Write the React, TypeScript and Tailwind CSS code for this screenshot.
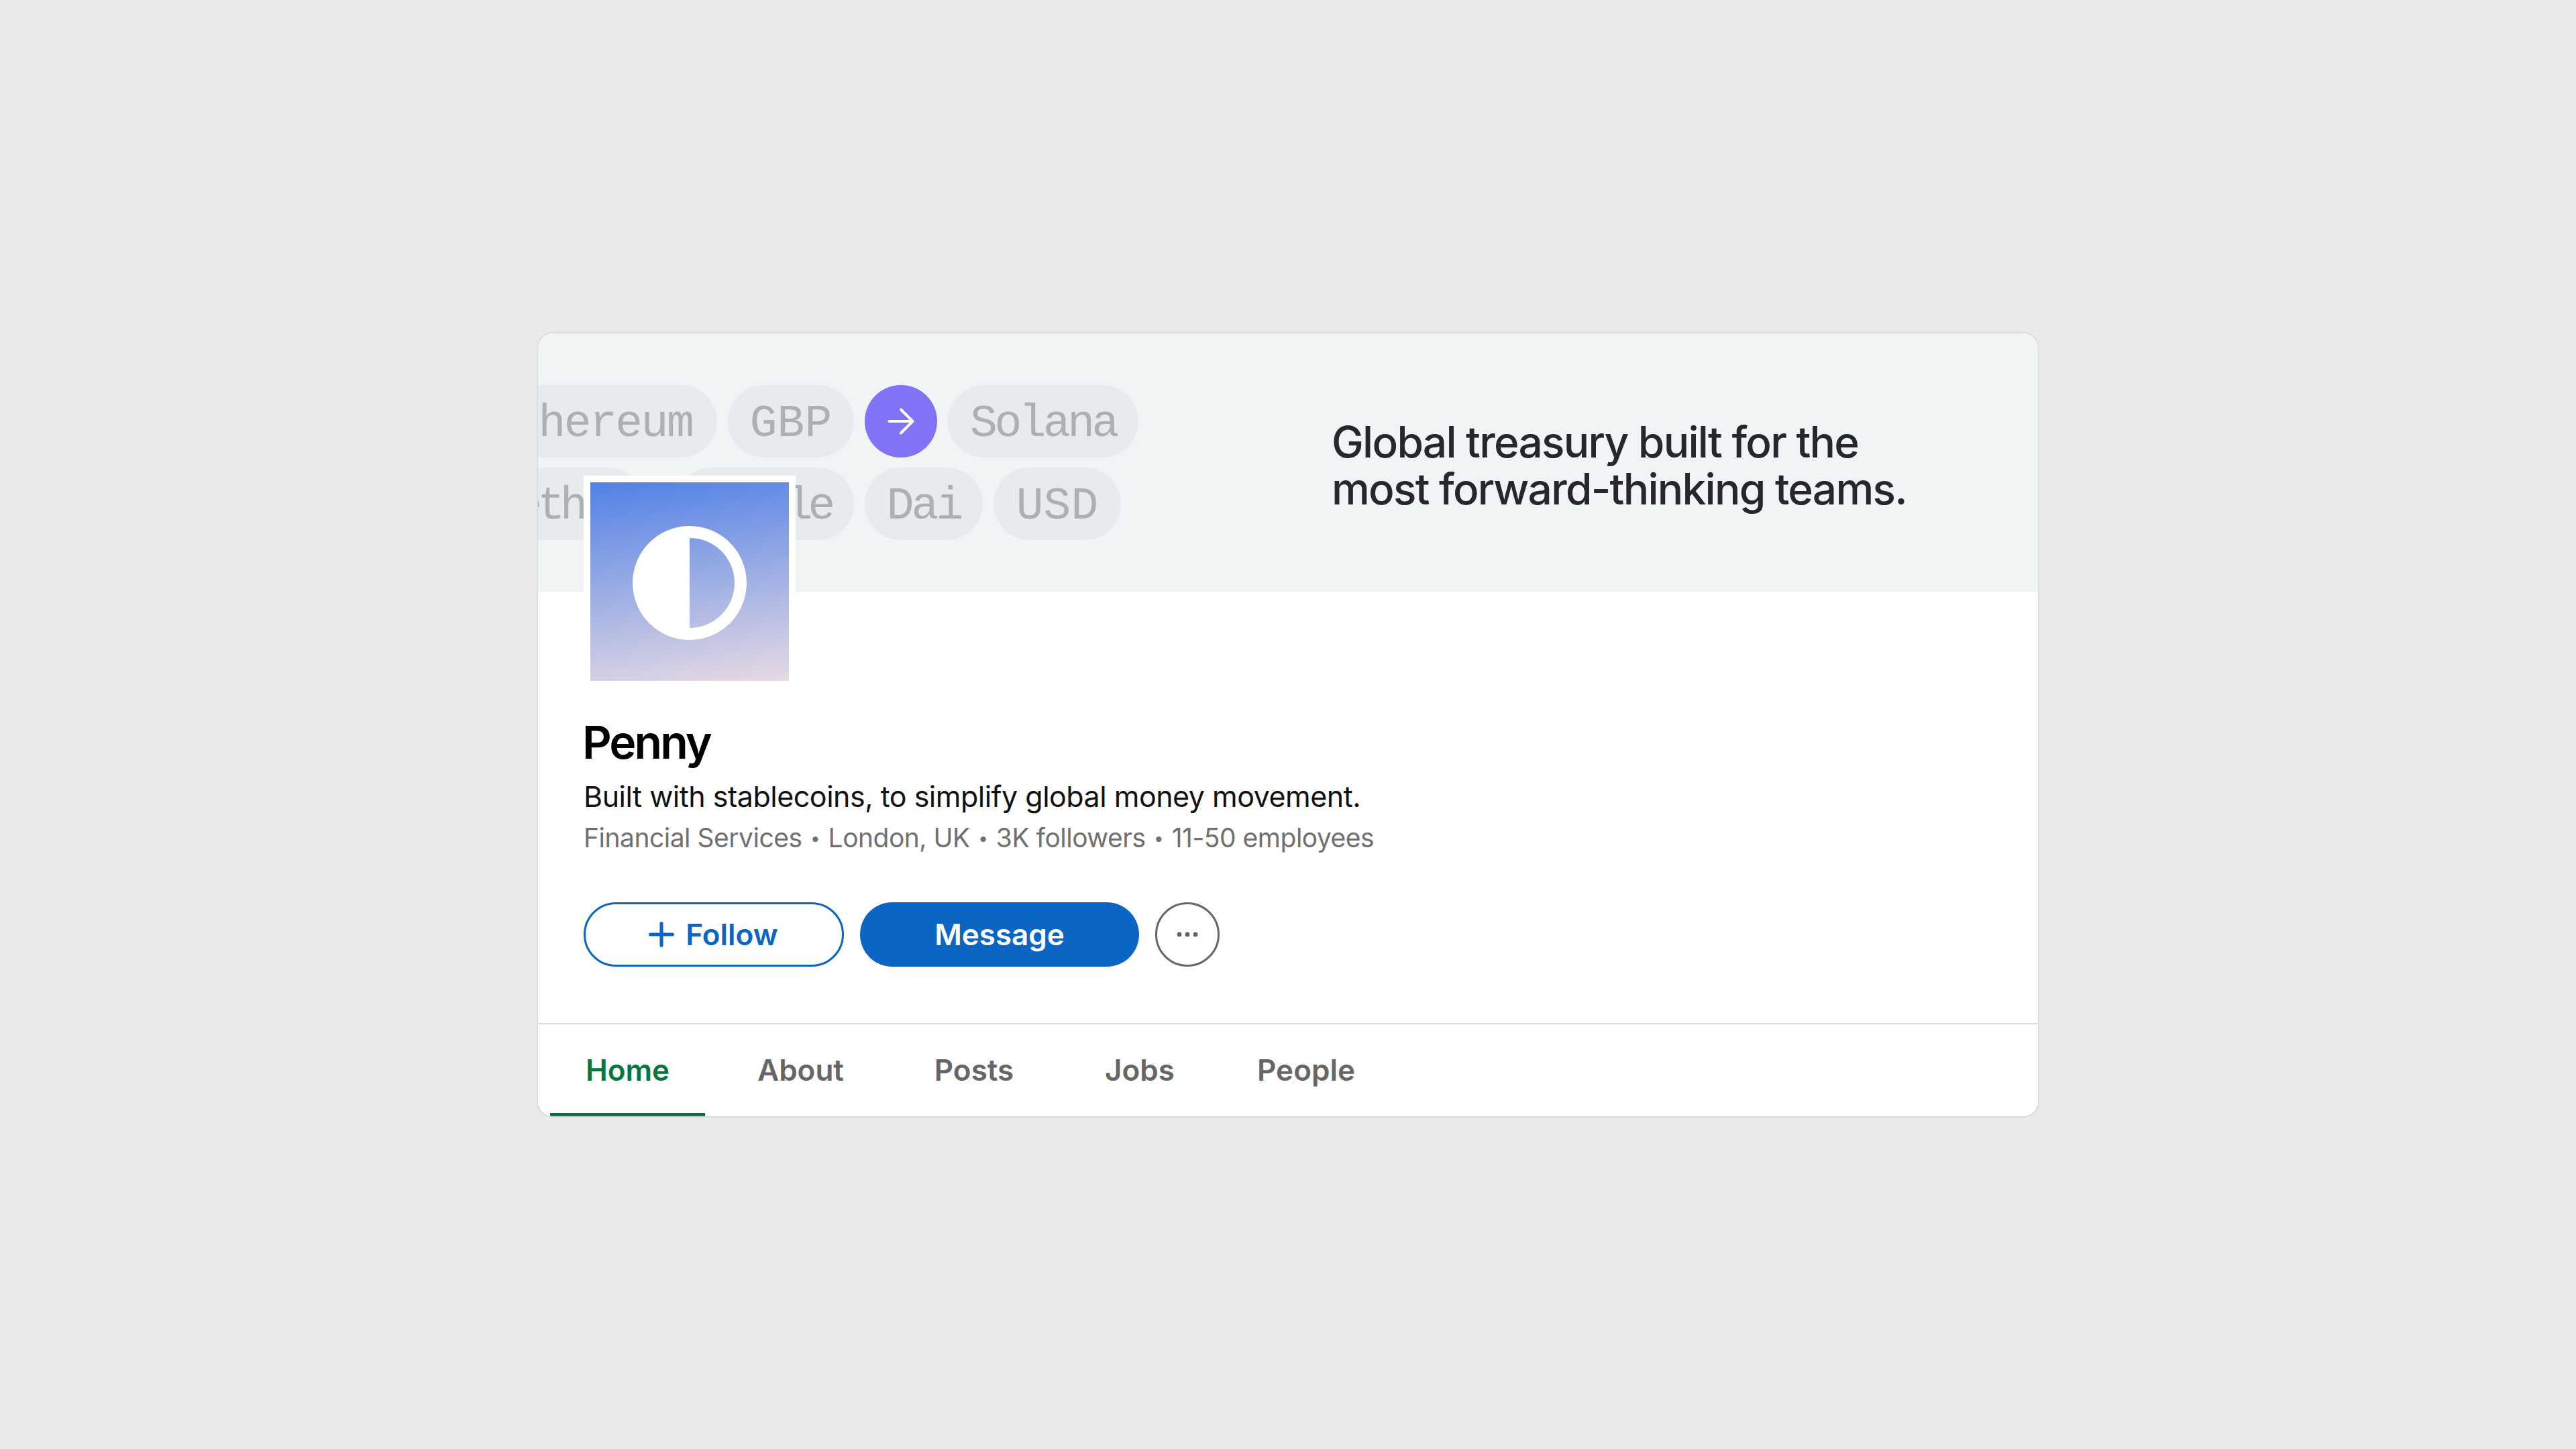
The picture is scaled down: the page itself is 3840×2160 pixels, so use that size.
import { ArrowRight, Plus } from 'lucide-react'

const sans = "font-['Inter',sans-serif]"
const mono = "font-['Liberation_Mono',monospace]"

function Pill({ label, className }: { label: string; className: string }) {
  return (
    <div
      className={`flex h-[108px] shrink-0 items-center justify-center rounded-full bg-[#e7ebed] pt-[8px] text-[68px] text-[#abb0b3] ${mono} ${className}`}
    >
      {label}
    </div>
  )
}

function Dot() {
  return <span className="mx-[2px] align-[4px] text-[26px]">•</span>
}

const tabs = [
  { label: 'Home', width: 'w-[231px]', active: true },
  { label: 'About', width: 'w-[285px]', active: false },
  { label: 'Posts', width: 'w-[232px]', active: false },
  { label: 'Jobs', width: 'w-[262px]', active: false },
  { label: 'People', width: 'w-[234px]', active: false },
]

export default function App() {
  return (
    <div className={`flex h-[2160px] w-[3840px] items-start justify-center bg-[#eaeaea] pt-[495px] ${sans}`}>
      <div className="relative h-[1171px] w-[2240px] overflow-hidden rounded-[24px] border-2 border-[#dcdcdc] bg-white">
        {/* Banner */}
        <div className="flex h-[385px] bg-[#f0f4f5]">
          <div className="flex w-[1185px] shrink-0 flex-col gap-[15px] pt-[77px]">
            <div className="ml-[-97px] flex gap-[16px]">
              <Pill label="Ethereum" className="w-[364px] pr-[16px] tracking-[-2.5px]" />
              <Pill label="GBP" className="w-[188px]" />
              <div className="flex size-[108px] shrink-0 items-center justify-center rounded-full bg-[#7f73f6]">
                <ArrowRight size={60} strokeWidth={1.6} className="text-white" />
              </div>
              <Pill label="Solana" className="w-[284px] tracking-[-4.5px]" />
            </div>
            <div className="ml-[-102px] flex gap-[16px]">
              <Pill label="Tether" className="w-[260px] pl-[10px] tracking-[-7px]" />
              <Pill label="Circle" className="ml-[31px] w-[266px] pr-[6px] tracking-[-7px]" />
              <Pill label="Dai" className="w-[176px] tracking-[-4px]" />
              <Pill label="USD" className="w-[190px]" />
            </div>
          </div>
          <div className="ml-[-2px] whitespace-nowrap pt-[127px] text-[64px] font-medium leading-[70px] tracking-[-1.75px] text-[#26262b]">
            <div>Global treasury built for the</div>
            <div>most forward-thinking teams.</div>
          </div>
        </div>

        {/* Logo */}
        <div className="relative mb-[41px] ml-[68px] mt-[-173px] size-[316px] border-[10px] border-white bg-[linear-gradient(172deg,#5181e6_0%,#e6dae3_100%)]">
          <div className="flex size-full items-center justify-center pt-[3px]">
            <svg width="170" height="170" viewBox="0 0 170 170">
              <path
                fill="#ffffff"
                fillRule="evenodd"
                d="M85 0a85 85 0 1 0 0 170A85 85 0 0 0 85 0ZM85 18a67 67 0 0 1 0 134Z"
              />
            </svg>
          </div>
        </div>

        {/* Company info */}
        <div className="pl-[68px]">
          <h1 className="ml-[-2px] text-[68px] font-semibold leading-[80px] tracking-[-3px] text-black">Penny</h1>
          <p className="mt-[13px] text-[43px] leading-[56px] tracking-[-0.5px] text-[#111111]">
            Built with stablecoins, to simplify global money movement.
          </p>
          <p className="mt-[8px] text-[39px] leading-[52px] tracking-[-0.5px] text-[#707070]">
            Financial Services <Dot /> London, UK <Dot /> 3K followers <Dot /> 11-50 employees
          </p>

          <div className="mt-[69px] flex gap-[24px]">
            <button className="flex h-[96px] w-[388px] items-center justify-center gap-[8px] rounded-full border-[3px] border-[#0a66c2] pr-[10px] text-[44px] font-semibold text-[#0a66c2]">
              <Plus size={56} strokeWidth={2.2} />
              Follow
            </button>
            <button className="flex h-[96px] w-[416px] items-center justify-center rounded-full bg-[#0a66c2] text-[44px] font-semibold text-white">
              Message
            </button>
            <button className="flex size-[96px] items-center justify-center rounded-full border-[3px] border-[#666666]">
              <svg width="32" height="8" viewBox="0 0 32 8" fill="#666666">
                <circle cx="4" cy="4" r="3.4" />
                <circle cx="16" cy="4" r="3.4" />
                <circle cx="28" cy="4" r="3.4" />
              </svg>
            </button>
          </div>
        </div>

        {/* Tabs */}
        <div className="mt-[84px] flex h-[140px] border-t-2 border-[#dcdcdc] pl-[18px]">
          {tabs.map((tab) => (
            <div
              key={tab.label}
              className={`flex h-full items-center justify-center border-b-[6px] pt-[4px] text-[44px] font-semibold ${tab.width} ${
                tab.active ? 'rounded-t-[4px] border-[#05763f] text-[#05763f]' : 'border-transparent text-[#666666]'
              }`}
            >
              {tab.label}
            </div>
          ))}
        </div>
      </div>
    </div>
  )
}
